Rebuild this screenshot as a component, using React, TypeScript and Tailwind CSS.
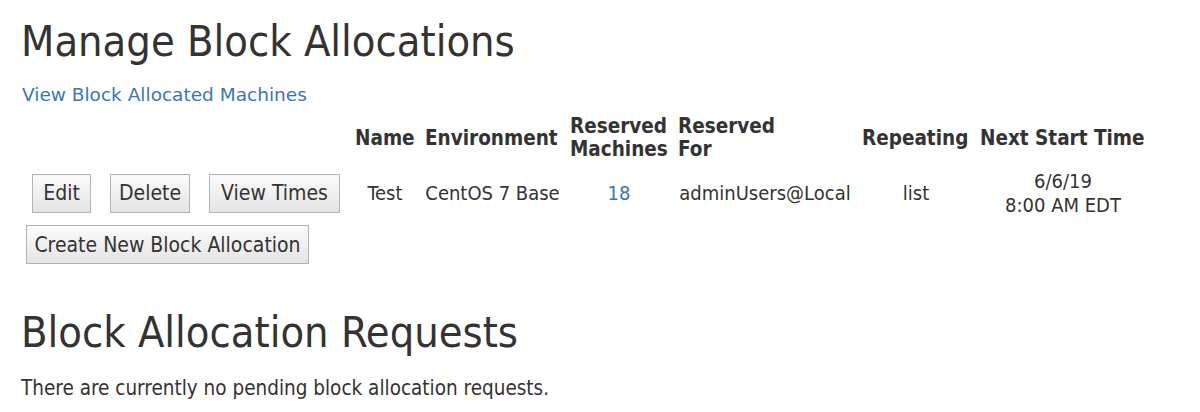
import React from 'react';

const font = { fontFamily: '"DejaVu Sans Condensed", "DejaVu Sans", sans-serif' };

function Btn({ children, className = '' }: { children: React.ReactNode; className?: string }) {
  return (
    <button
      className={`h-[39px] border border-[#b3b3b3] bg-gradient-to-b from-[#fbfbfb] to-[#e4e4e4] text-[#333] text-[21px] leading-[24px] whitespace-nowrap text-center ${className}`}
    >
      {children}
    </button>
  );
}

export default function App() {
  return (
    <div style={font} className="bg-white text-[#333] pl-5 pt-[17px] min-h-[412px]">
      <h1 className="pl-[1px] text-[43px] leading-[48px] font-normal">Manage Block Allocations</h1>

      <div className="mt-[18px] leading-[24px] pl-[2px]">
        <a href="#" style={{ fontFamily: '"DejaVu Sans", sans-serif' }} className="text-[#3b76b3] text-[18.5px]">
          View Block Allocated Machines
        </a>
      </div>

      <table className="mt-[3px] ml-[2px] border-collapse">
        <thead>
          <tr className="text-left text-[20.5px] leading-[23px] font-bold">
            <th className="px-[5px] py-[4px]" />
            <th className="px-[5px] py-[4px]" />
            <th className="px-[5px] py-[4px]" />
            <th className="px-[5px] py-[4px] w-[70px] text-left">Name</th>
            <th className="px-[5px] py-[4px] w-[145px] text-left">Environment</th>
            <th className="px-[5px] py-[4px] w-[108px] text-left">Reserved<br />Machines</th>
            <th className="px-[5px] py-[4px] w-[184px] text-left">Reserved<br />For</th>
            <th className="px-[5px] py-[4px] w-[118px] text-left">Repeating</th>
            <th className="px-[5px] py-[4px] w-[176px] text-left">Next Start Time</th>
          </tr>
        </thead>
        <tbody>
          <tr className="text-center text-[20px] leading-[24px] whitespace-nowrap">
            <td className="px-[5px] py-[4px]"><Btn className="mx-[5px] w-[59px]">Edit</Btn></td>
            <td className="pl-[4px] pr-[5px] py-[4px]"><Btn className="mx-[5px] w-[80px]">Delete</Btn></td>
            <td className="pl-[4px] pr-[5px] py-[4px]"><Btn className="mx-[5px] w-[131px]">View Times</Btn></td>
            <td className="px-[5px] py-[4px]">Test</td>
            <td className="px-[5px] py-[4px]">CentOS 7 Base</td>
            <td className="px-[5px] py-[4px]"><a href="#" className="text-[#3b76b3]">18</a></td>
            <td className="px-[5px] py-[4px]">adminUsers@Local</td>
            <td className="px-[5px] py-[4px]">list</td>
            <td className="px-[5px] py-[4px]">6/6/19<br />8:00 AM EDT</td>
          </tr>
        </tbody>
      </table>

      <Btn className="mt-[4px] ml-[6px] h-[38px] w-[283px]">Create New Block Allocation</Btn>

      <h1 className="mt-[44px] pl-[1px] text-[43px] leading-[48px] font-normal">Block Allocation Requests</h1>

      <p className="mt-[20px] pl-[1px] text-[20.5px] leading-[24px]">There are currently no pending block allocation requests.</p>
    </div>
  );
}
